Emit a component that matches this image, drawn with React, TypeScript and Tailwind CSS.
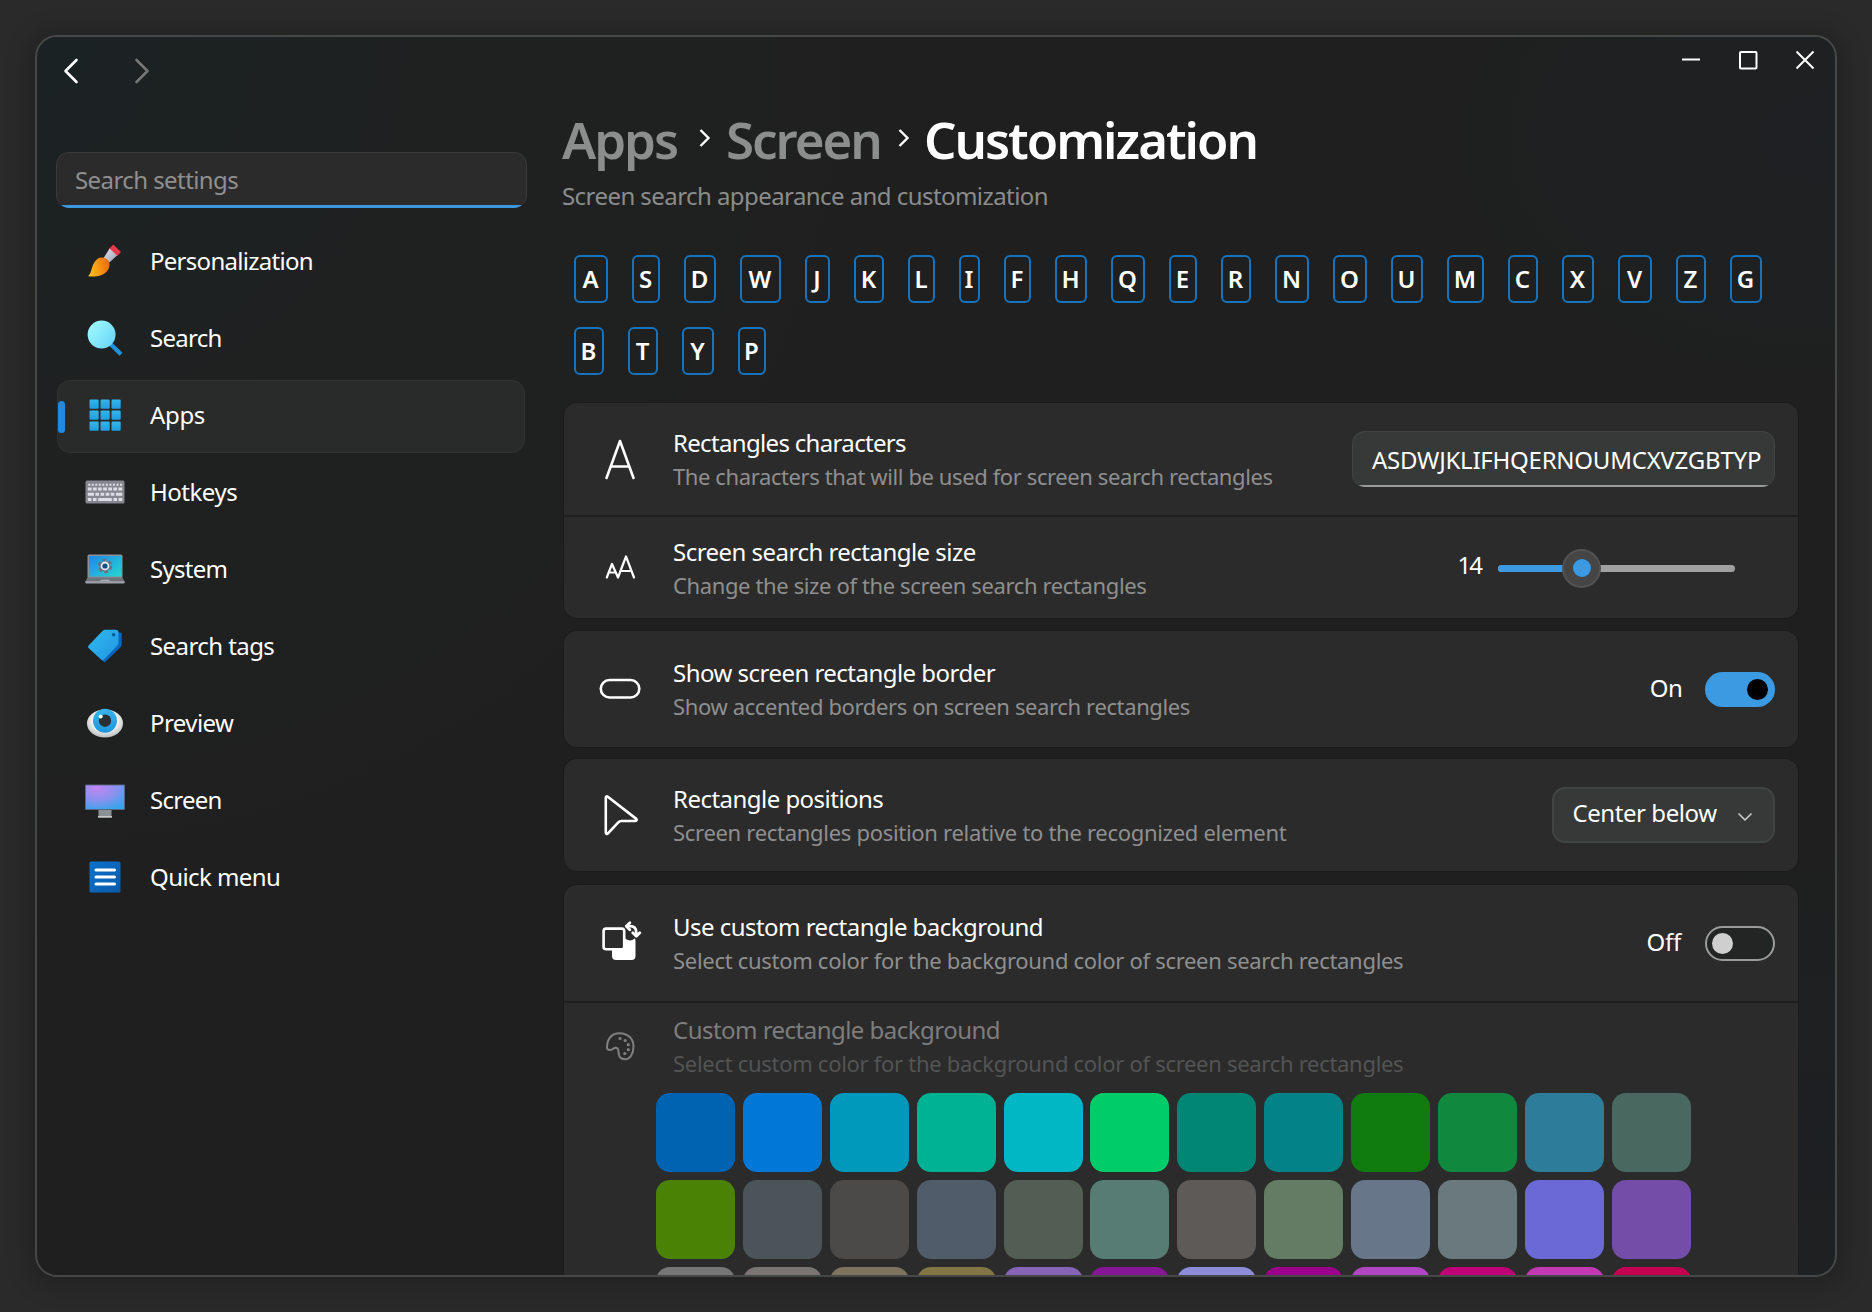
import type { ReactNode } from "react";

function BrushIcon() {
  return (
    <svg viewBox="0 0 40 40" className="size-10">
      <defs>
        <linearGradient id="brush-body" x1="0" y1="0.6" x2="1" y2="0.4">
          <stop offset="0" stopColor="#fdbf1b" />
          <stop offset="1" stopColor="#ea6a0c" />
        </linearGradient>
        <linearGradient id="brush-metal" x1="0" y1="0" x2="1" y2="1">
          <stop offset="0" stopColor="#e3e5ee" />
          <stop offset="1" stopColor="#9a9db0" />
        </linearGradient>
      </defs>
      <path d="M28.2 3.6 36 11l-4 4.2-8-7.2z" fill="#e8384a" />
      <path d="M24.6 7.6 32 14.4l-7.6 7L18.6 17z" fill="url(#brush-metal)" />
      <path
        d="M3.5 34.6c2-1.6 2.4-4.3 3.7-8.3 1.8-5.8 4.800-9.6 9.4-9.9 5-.3 8.5 3.4 7.9 8.2-.7 6-5.8 9.7-12.5 10.6-3 .4-6.5.5-8.5.1z"
        fill="url(#brush-body)"
      />
    </svg>
  );
}

function MagnifierIcon() {
  return (
    <svg viewBox="0 0 40 40" className="size-10">
      <defs>
        <linearGradient id="lens" x1="0" y1="0.1" x2="1" y2="0.9">
          <stop offset="0" stopColor="#a3fcfb" />
          <stop offset="1" stopColor="#66d3fb" />
        </linearGradient>
      </defs>
      <path d="M25.5 26 36 36.2" stroke="#1f94dc" strokeWidth="4.2" />
      <circle cx="16.6" cy="16.6" r="14" fill="url(#lens)" />
    </svg>
  );
}

function AppsIcon() {
  const cells = [4.5, 15.5, 26.5];
  return (
    <svg viewBox="0 0 40 40" className="size-10">
      <defs>
        <linearGradient id="apps-cell" x1="0" y1="0" x2="0" y2="1">
          <stop offset="0" stopColor="#35b6ec" />
          <stop offset="1" stopColor="#219bdd" />
        </linearGradient>
      </defs>
      {cells.map((y) =>
        cells.map((x) => (
          <rect key={`${x}-${y}`} x={x} y={y} width="9.2" height="9.2" rx="1.2" fill="url(#apps-cell)" />
        )),
      )}
    </svg>
  );
}

function KeyboardIcon() {
  return (
    <svg viewBox="0 0 40 40" className="size-10">
      <rect x="0.5" y="8.5" width="39" height="23" rx="1.5" fill="#85868f" />
      <g stroke="#dddee4" fill="none">
        <path d="M3.2 12.7H37" strokeWidth="2" strokeDasharray="2 1.53" />
        <path d="M2.8 17H37.5" strokeWidth="3.200" strokeDasharray="3.8 1.3" />
        <path d="M2.8 22.3H9M10.4 22.3H14M15.5 22.3H19.2M20.7 22.3H24.4M25.8 22.3H29.4M30.9 22.3H37.3" strokeWidth="3" />
        <path d="M2.8 27.5H6.4M8 27.5H11.5M13.2 27.5H26.8M28.5 27.5H32M33.6 27.5H37.3" strokeWidth="3" />
      </g>
    </svg>
  );
}

function LaptopIcon() {
  return (
    <svg viewBox="0 0 40 40" className="size-10">
      <defs>
        <linearGradient id="laptop-screen" x1="0" y1="0" x2="1" y2="1">
          <stop offset="0" stopColor="#1f86e8" />
          <stop offset="1" stopColor="#25d8d0" />
        </linearGradient>
      </defs>
      <rect x="2.5" y="5.5" width="35" height="24" rx="1.5" fill="#8b9199" />
      <rect x="4" y="7" width="32" height="20.5" fill="url(#laptop-screen)" />
      <path d="M2.5 28.5h35l2.2 4.5H.3z" fill="#6f747c" />
      <path d="M.3 32.3h39.4v1.2a1 1 0 0 1-1 1H1.3a1 1 0 0 1-1-1z" fill="#9da2aa" />
      <path d="M15 32.3h10l-1-1.500h-8z" fill="#a9aeb5" />
      <circle cx="20" cy="17" r="5.800" fill="none" stroke="#66727f" strokeWidth="3" strokeDasharray="3.6 2.47" />
      <circle cx="20" cy="17" r="5.3" fill="#66727f" />
      <circle cx="20" cy="17" r="3.500" fill="#0d4f84" stroke="#e4eaf0" strokeWidth="1.8" />
    </svg>
  );
}

function TagIcon() {
  return (
    <svg viewBox="0 0 40 40" className="size-10">
      <defs>
        <linearGradient id="tag-face" x1="0" y1="0" x2="1" y2="1">
          <stop offset="0" stopColor="#31bcf0" />
          <stop offset="1" stopColor="#1f93e0" />
        </linearGradient>
      </defs>
      <path d="M32.5 6.2l2.7.4a1.8 1.8 0 0 1 1.5 1.8v10c0 1-.3 1.8-1 2.5L21 35.3c-1 .8-2 .8-2.8 0l-3-3z" fill="#0a66bf" />
      <path
        d="M20.5 3.7h10.2A2.8 2.8 0 0 1 33.5 6.5v10.3c0 1-.4 2-1.1 2.7L19 33.5c-1 1-2 1-3 0L3.8 22.3c-1-1-1-2 0-3L17.5 5c.8-.9 1.8-1.3 3-1.3z"
        fill="url(#tag-face)"
      />
      <circle cx="28.6" cy="8.8" r="1.8" fill="#0a5a9c" />
    </svg>
  );
}

function EyeIcon() {
  return (
    <svg viewBox="0 0 40 40" className="size-10">
      <defs>
        <radialGradient id="eye-white" cx="0.5" cy="0.4" r="0.6">
          <stop offset="0.6" stopColor="#f2f2f2" />
          <stop offset="1" stopColor="#b9bcbc" />
        </radialGradient>
        <linearGradient id="eye-iris" x1="0" y1="0" x2="0" y2="1">
          <stop offset="0" stopColor="#38b4ec" />
          <stop offset="1" stopColor="#1f97df" />
        </linearGradient>
      </defs>
      <ellipse cx="20" cy="20.5" rx="18" ry="14" fill="url(#eye-white)" />
      <circle cx="20" cy="17.7" r="12" fill="url(#eye-iris)" />
      <circle cx="20" cy="17.7" r="6.2" fill="#2b2f35" />
      <circle cx="15.7" cy="13.4" r="2" fill="#fff" />
    </svg>
  );
}

function MonitorIcon() {
  return (
    <svg viewBox="0 0 40 40" className="size-10">
      <defs>
        <radialGradient id="monitor-screen" cx="0.3" cy="0.1" r="1">
          <stop offset="0" stopColor="#c285f4" />
          <stop offset="0.55" stopColor="#8493ee" />
          <stop offset="1" stopColor="#35a5ea" />
        </radialGradient>
      </defs>
      <rect x="13.5" y="29" width="13" height="8.5" fill="#8d9094" />
      <rect x="13" y="36" width="14" height="1.6" fill="#c6c8ca" />
      <rect x="0" y="4.5" width="40" height="25.5" rx="0.8" fill="#56607a" />
      <rect x="0.9" y="5.4" width="38.2" height="23.7" fill="url(#monitor-screen)" />
    </svg>
  );
}

function MenuIcon() {
  return (
    <svg viewBox="0 0 40 40" className="size-10">
      <defs>
        <linearGradient id="menu-box" x1="0" y1="0" x2="1" y2="1">
          <stop offset="0" stopColor="#0b72cc" />
          <stop offset="1" stopColor="#0a5bab" />
        </linearGradient>
      </defs>
      <rect x="4.5" y="4.5" width="31" height="31" rx="1.6" fill="url(#menu-box)" />
      <path d="M11 13H29.5M11 20H29.5M11 27H29.5" stroke="#fff" strokeWidth="3" strokeLinecap="round" />
    </svg>
  );
}

const navItems: { label: string; icon: ReactNode; tracking: string; active?: boolean }[] = [
  { label: "Personalization", icon: <BrushIcon />, tracking: "tracking-[-0.03em]" },
  { label: "Search", icon: <MagnifierIcon />, tracking: "tracking-[-0.03em]" },
  { label: "Apps", icon: <AppsIcon />, tracking: "tracking-[-0.015em]", active: true },
  { label: "Hotkeys", icon: <KeyboardIcon />, tracking: "tracking-[-0.02em]" },
  { label: "System", icon: <LaptopIcon />, tracking: "tracking-[-0.03em]" },
  { label: "Search tags", icon: <TagIcon />, tracking: "tracking-[-0.024em]" },
  { label: "Preview", icon: <EyeIcon />, tracking: "tracking-[-0.024em]" },
  { label: "Screen", icon: <MonitorIcon />, tracking: "tracking-[-0.03em]" },
  { label: "Quick menu", icon: <MenuIcon />, tracking: "tracking-[-0.024em]" },
];

/* Each key cap: its letter and its width in pixels. */
const keyRows: [string, number][][] = [
  [
    ["A", 34], ["S", 28], ["D", 32], ["W", 41], ["J", 25], ["K", 30], ["L", 27], ["I", 21],
    ["F", 27], ["H", 32], ["Q", 34], ["E", 28], ["R", 30], ["N", 34], ["O", 34], ["U", 32],
    ["M", 37], ["C", 30], ["X", 32], ["V", 34], ["Z", 30], ["G", 32],
  ],
  [["B", 30], ["T", 30], ["Y", 32], ["P", 28]],
];

const swatches = [
  "#0063b1", "#0078d7", "#0099bc", "#00b294", "#00b7c3", "#00cc6a",
  "#018574", "#038387", "#107c10", "#10893e", "#2d7d9a", "#486860",
  "#498205", "#4a5459", "#4c4a48", "#515c6b", "#525e54", "#567c73",
  "#5d5a58", "#647c64", "#68768a", "#69797e", "#6b69d6", "#744da9",
  "#767676", "#7a7574", "#7e735f", "#847545", "#8764b8", "#881798",
  "#8e8cd8", "#9a0089", "#b146c2", "#bf0077", "#c239b3", "#c30052",
];

function Breadcrumb() {
  return (
    <svg viewBox="0 0 12 18" className="mb-0.5 h-[18px] w-3" fill="none" stroke="#fff" strokeWidth="2.4">
      <path d="M1.5 1 9.5 9 1.5 17" />
    </svg>
  );
}

function SettingRow({
  icon,
  title,
  description,
  height,
  titleTracking = "tracking-[-0.022em]",
  descriptionTracking = "tracking-[-0.015em]",
  disabled = false,
  children,
}: {
  icon: ReactNode;
  title: string;
  description: string;
  height: string;
  titleTracking?: string;
  descriptionTracking?: string;
  disabled?: boolean;
  children?: ReactNode;
}) {
  return (
    <div className={`flex items-center pr-[23px] ${height}`}>
      <div className={`w-[109px] shrink-0 pl-[34px] ${disabled ? "opacity-40" : ""}`}>{icon}</div>
      <div className="flex-1 whitespace-nowrap">
        <div className={`text-2xl/[34px] ${titleTracking} ${disabled ? "text-[#7d7d7d]" : "text-white"}`}>{title}</div>
        <div className={`text-[22px]/8 ${descriptionTracking} ${disabled ? "text-[#535454]" : "text-[#8f8f8f]"}`}>
          {description}
        </div>
      </div>
      {children}
    </div>
  );
}

function Card({ children }: { children: ReactNode }) {
  return (
    <section className="divide-y-2 divide-[#1e1e1e] overflow-hidden rounded-[13px] bg-[#2b2b2b] ring-1 ring-black/10">
      {children}
    </section>
  );
}

const iconProps = {
  viewBox: "0 0 44 44",
  className: "size-11",
  fill: "none",
  stroke: "#fff",
  strokeLinejoin: "round" as const,
};

export default function App() {
  return (
    <div className="h-[1312px] w-[1872px] bg-[#2a2a2a] p-[35px] font-['Noto_Sans',sans-serif] text-white">
      <div className="flex h-[1242px] w-[1802px] overflow-hidden rounded-[22px] border-2 border-[#464747] bg-[#1f1f1f] bg-[radial-gradient(circle_at_0_0,#1b2223_0,#1f2120_460px,transparent_900px),radial-gradient(ellipse_at_1798px_100px,#1e2123_0,transparent_420px),radial-gradient(ellipse_at_1798px_1100px,#1d2022_0,transparent_500px)] shadow-[0_2px_24px_6px_rgba(0,0,0,0.22)]">
        <aside className="flex w-[526px] shrink-0 flex-col pl-[19px]">
          <div className="flex h-[115px] shrink-0 items-start gap-[55px] pl-[7px] pt-[21px]">
            <svg viewBox="0 0 16 26" className="h-[26px] w-4" fill="none" stroke="#fff" strokeWidth="2.6" strokeLinecap="round" strokeLinejoin="round">
              <path d="M13.500 2 2.500 13l11 11" />
            </svg>
            <svg viewBox="0 0 16 26" className="h-[26px] w-4" fill="none" stroke="#757777" strokeWidth="2.6" strokeLinecap="round" strokeLinejoin="round">
              <path d="M2.500 2l11 11-11 11" />
            </svg>
          </div>
          <div className="relative flex h-14 w-[471px] shrink-0 items-center overflow-hidden rounded-[13px] border border-b-0 border-[#393a3a] bg-[#2b2b2b] pb-[2px] pl-[18px] text-2xl tracking-[-0.024em] text-[#8f8f8f]">
            Search settings
            <span className="absolute inset-x-0 bottom-0 h-[3px] bg-[#3c98dc]" />
          </div>
          <nav className="mt-[18px] flex w-[469px] flex-col gap-1 pl-px">
            {navItems.map((item) => (
              <div
                key={item.label}
                className={`flex h-[73px] items-center rounded-[13px] border pb-1 ${
                  item.active ? "border-[#313333] bg-[#292b2b]" : "border-transparent"
                }`}
              >
                <span className={`mt-1 h-8 w-[7px] rounded-full ${item.active ? "bg-[#2488dc]" : ""}`} />
                <span className="ml-[19.500px]">{item.icon}</span>
                <span className={`ml-[25.500px] text-2xl ${item.tracking}`}>{item.label}</span>
              </div>
            ))}
          </nav>
        </aside>

        <main className="flex flex-1 flex-col">
          <div className="flex h-[72px] shrink-0 justify-end gap-[37px] pr-5 pt-[13px]">
            <svg viewBox="0 0 20 20" className="size-5" fill="none" stroke="#fff" strokeWidth="2">
              <path d="M1 9.500h18" />
            </svg>
            <svg viewBox="0 0 20 20" className="size-5" fill="none" stroke="#fff" strokeWidth="2">
              <rect x="2" y="2" width="16.500" height="16.500" rx="1" />
            </svg>
            <svg viewBox="0 0 20 20" className="size-5" fill="none" stroke="#fff" strokeWidth="2">
              <path d="M1.500 1.500l17 17M18.500 1.500l-17 17" />
            </svg>
          </div>

          <header className="shrink-0 whitespace-nowrap">
            <h1 className="-ml-px flex items-center text-[51px]/[60px] font-semibold tracking-[-0.04em]">
              <span className="w-[137px] text-[#8c8d8d]">Apps</span>
              <Breadcrumb />
              <span className="ml-[15px] w-[172px] text-[#8c8d8d]">Screen</span>
              <Breadcrumb />
              <span className="ml-[14px]">Customization</span>
            </h1>
            <p className="-ml-px mt-[9px] text-2xl/9 tracking-[-0.0235em] text-[#8b8c8c]">
              Screen search appearance and customization
            </p>
          </header>

          <div className="mt-[41px] flex shrink-0 flex-col gap-6 pl-[11px]">
            {keyRows.map((row, i) => (
              <div key={i} className="flex gap-6">
                {row.map(([letter, width]) => (
                  <kbd
                    key={letter}
                    className="flex h-12 items-center justify-center rounded-[6px] border-2 border-[#1674be] pb-px pr-px font-['Noto_Sans',sans-serif] text-2xl font-semibold"
                    style={{ width }}
                  >
                    {letter}
                  </kbd>
                ))}
              </div>
            ))}
          </div>

          <div className="ml-px mt-7 flex w-[1234px] shrink-0 flex-col">
            <Card>
              <SettingRow
                height="h-[114px]"
                title="Rectangles characters"
                titleTracking="tracking-[-0.028em]"
                description="The characters that will be used for screen search rectangles"
                descriptionTracking="tracking-[-0.018em]"
                icon={
                  <svg {...iconProps} strokeWidth="2.6" strokeLinecap="round">
                    <path d="M8.5 41 22 4l13.5 37M12.8 29.5h18.4" />
                  </svg>
                }
              >
                <div className="relative flex h-14 w-[423px] items-center overflow-hidden rounded-[13px] border border-b-0 border-[#424343] bg-[#373838] pl-[19px] text-2xl tracking-[-0.01em]">
                  ASDWJKLIFHQERNOUMCXVZGBTYP
                  <span className="absolute inset-x-0 bottom-0 h-0.5 bg-[#9a9a9a]" />
                </div>
              </SettingRow>
              <SettingRow
                height="h-[101px]"
                title="Screen search rectangle size"
                description="Change the size of the screen search rectangles"
                descriptionTracking="tracking-[-0.017em]"
                icon={
                  <svg {...iconProps} strokeWidth="2.2" strokeLinecap="round">
                    <path d="M8.8 31.5 14 18l6 13.5 8-21 8 21M10.5 26.5h7M22.5 25h11" />
                  </svg>
                }
              >
                <span className="pb-[6px] text-2xl tracking-[-0.08em]">14</span>
                <div className="relative ml-[17px] mr-10 h-10 w-[237px]">
                  <div className="mt-[17px] flex h-[7px] overflow-hidden rounded-full bg-[#a0a0a0]">
                    <div className="w-[84px] bg-[#3b9ae2]" />
                  </div>
                  <div className="absolute left-[64px] top-px flex size-[39px] items-center justify-center rounded-full border-2 border-[#525252] bg-[#454545]">
                    <div className="size-[18px] rounded-full bg-[#3b9ae2]" />
                  </div>
                </div>
              </SettingRow>
            </Card>

            <div className="mt-[13px]">
              <Card>
                <SettingRow
                  height="h-[116px]"
                  title="Show screen rectangle border"
                  description="Show accented borders on screen search rectangles"
                  descriptionTracking="tracking-[-0.017em]"
                  icon={
                    <svg {...iconProps} strokeWidth="2.6">
                      <rect x="2.800" y="13" width="38.500" height="17.500" rx="8.750" />
                    </svg>
                  }
                >
                  <span className="pb-0.5 text-2xl tracking-[-0.03em]">On</span>
                  <div className="ml-[23px] flex h-[35px] w-[70px] items-center justify-end rounded-full bg-[#3b9ae2] pr-[7px]">
                    <div className="size-[21px] rounded-full bg-black" />
                  </div>
                </SettingRow>
              </Card>
            </div>

            <div className="mt-3">
              <Card>
                <SettingRow
                  height="h-[112px]"
                  title="Rectangle positions"
                  description="Screen rectangles position relative to the recognized element"
                  descriptionTracking="tracking-[-0.0135em]"
                  icon={
                    <svg {...iconProps} strokeWidth="2.6">
                      <path d="M7.8 4.7c0-1.3 1-1.7 2-.9L38 25.6c1.3 1 .8 2.4-.8 2.4H23.5c-1.5 0-2.300.3-3.200 1.400L10 40.400c-1 1-2.200.6-2.200-.8z" />
                    </svg>
                  }
                >
                  <div className="flex h-14 w-[223px] items-center rounded-[13px] border-2 border-[#424343] bg-[#373838] pl-[18.500px] text-2xl tracking-[-0.018em]">
                    <span className="pb-1">Center below</span>
                    <svg viewBox="0 0 16 10" className="ml-5 mt-1 h-[10px] w-4" fill="none" stroke="#d0d0d0" strokeWidth="1.5">
                      <path d="M1.5 1.5 8 8l6.5-6.5" />
                    </svg>
                  </div>
                </SettingRow>
              </Card>
            </div>

            <div className="mt-[14px]">
              <Card>
                <SettingRow
                  height="h-[118px]"
                  title="Use custom rectangle background"
                  description="Select custom color for the background color of screen search rectangles"
                  descriptionTracking="tracking-[-0.0135em]"
                  icon={
                    <svg {...iconProps} strokeWidth="2.6">
                      <rect x="14" y="16" width="23.5" height="23" rx="4" fill="#fff" stroke="none" />
                      <circle cx="32" cy="13" r="6.5" fill="#2b2b2b" stroke="none" />
                      <rect x="5.6" y="7.6" width="20.600" height="20.600" rx="2.500" fill="#2b2b2b" />
                      <path d="M29.500 5.200h2.500c4 0 6.300 2.500 6.300 6.500v2" strokeWidth="2.800" />
                      <path d="M31.800 1.700 28.300 5.200 31.800 8.700M34.800 11.800l3.500 3.500 3.500-3.500" strokeLinecap="round" strokeWidth="2.800" />
                    </svg>
                  }
                >
                  <span className="pb-0.5 text-2xl tracking-[-0.01em]">Off</span>
                  <div className="ml-6 flex h-[35px] w-[70px] items-center rounded-full border-2 border-[#9b9b9b] bg-[#232424] pl-[5px]">
                    <div className="size-[21px] rounded-full bg-[#cfcfcf]" />
                  </div>
                </SettingRow>
                <div>
                  <SettingRow
                    height="h-[86px]"
                    title="Custom rectangle background"
                    description="Select custom color for the background color of screen search rectangles"
                    descriptionTracking="tracking-[-0.0135em]"
                    disabled
                    icon={
                      <svg {...iconProps} strokeWidth="2">
                        <path d="M9 23.5C9 14.5 14 9.2 21.5 9.2c8 0 14 5.3 14 13.3 0 7.5-3.5 12.800-8.500 12.800-5.500 0-6.500-4-6.500-7.500 0-2.500-.8-4-3-4-2 0-2.500 2.200-5 2.200-2.300 0-3.500-1-3.500-2.500z" />
                        <g fill="#fff" stroke="none">
                          <circle cx="22" cy="14.500" r="1.6" />
                          <circle cx="27.2" cy="16.500" r="1.6" />
                          <circle cx="30.3" cy="20.700" r="1.6" />
                          <circle cx="30.3" cy="25.700" r="1.6" />
                          <circle cx="26.8" cy="29.500" r="1.6" />
                        </g>
                      </svg>
                    }
                  />
                  <div className="grid w-fit grid-cols-12 gap-x-[7.9px] gap-y-2 pb-6 pl-[92px] pt-1">
                    {swatches.map((color) => (
                      <div key={color} className="size-[79px] rounded-[14px]" style={{ backgroundColor: color }} />
                    ))}
                  </div>
                </div>
              </Card>
            </div>
          </div>
        </main>
      </div>
    </div>
  );
}
